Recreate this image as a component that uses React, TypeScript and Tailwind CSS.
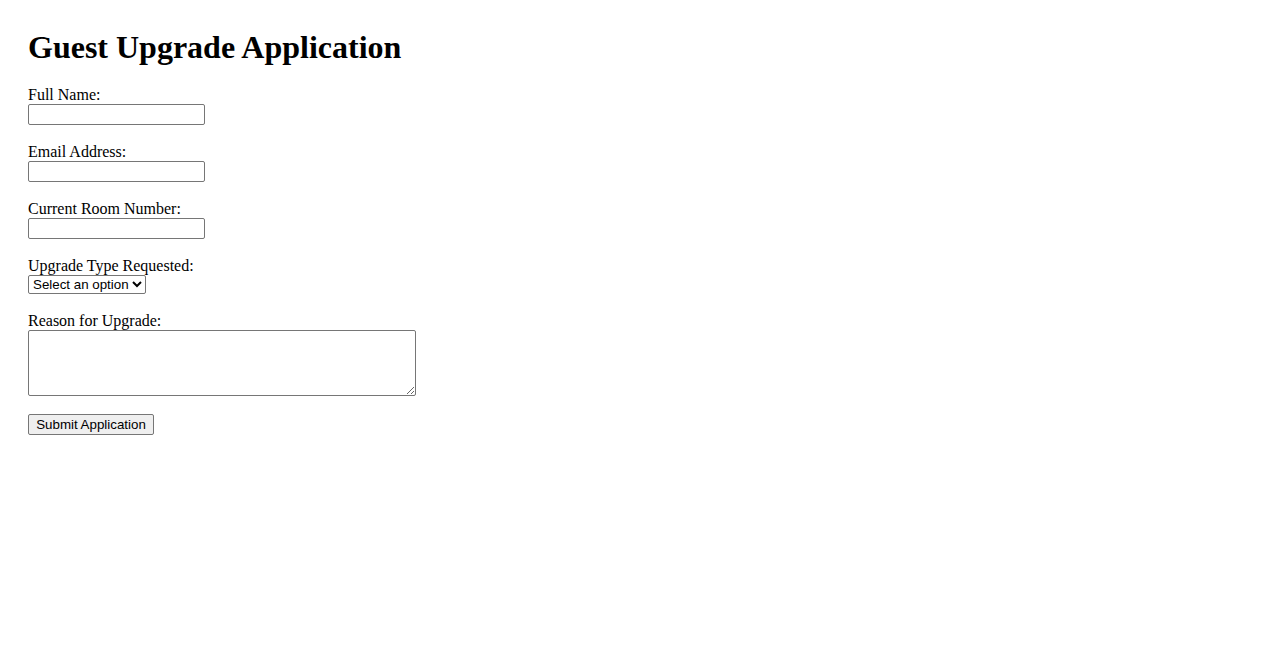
import { useState } from "react";

const fieldClass =
  "block w-[177px] h-[21px] border border-[#767676] rounded-[2px] bg-white px-[2px] text-[13.33px] [font-family:'Liberation_Sans',Arial,sans-serif]";

function Field({ label, type = "text" }: { label: string; type?: string }) {
  return (
    <div className="mb-[18px]">
      <label className="block h-[18px] leading-[18px]">{label}</label>
      <input type={type} className={fieldClass} />
    </div>
  );
}

export default function App() {
  const [upgrade, setUpgrade] = useState("");

  return (
    <div className="min-h-screen bg-white p-[28px] text-black text-[16px] [font-family:'Liberation_Serif','Times_New_Roman',serif]">
      <h1 className="mt-[1px] mb-[20px] h-[37px] text-[32px] font-bold leading-[37px]">Guest Upgrade Application</h1>

      <form onSubmit={(e) => e.preventDefault()}>
        <Field label="Full Name:" />
        <Field label="Email Address:" type="email" />
        <Field label="Current Room Number:" />

        <div className="mb-[18px]">
          <label className="block h-[18px] leading-[18px]">Upgrade Type Requested:</label>
          <select
            value={upgrade}
            onChange={(e) => setUpgrade(e.target.value)}
            className="block h-[19px] w-[118px] border border-[#767676] rounded-[2px] bg-white text-[13.33px] [font-family:'Liberation_Sans',Arial,sans-serif]"
          >
            <option value="">Select an option</option>
            <option value="suite">Suite</option>
            <option value="ocean">Ocean View</option>
            <option value="club">Club Level</option>
          </select>
        </div>

        <div className="mb-[18px]">
          <label className="block h-[18px] leading-[18px]">Reason for Upgrade:</label>
          <textarea className="block h-[66px] w-[388px] border border-[#767676] rounded-[2px] bg-white p-[2px] text-[13.33px] [font-family:'Liberation_Mono',monospace]" />
        </div>

        <button
          type="submit"
          className="block h-[21px] w-[126px] border border-[#767676] rounded-[2px] bg-[#efefef] text-[13.33px] leading-none [font-family:'Liberation_Sans',Arial,sans-serif]"
        >
          Submit Application
        </button>
      </form>
    </div>
  );
}
